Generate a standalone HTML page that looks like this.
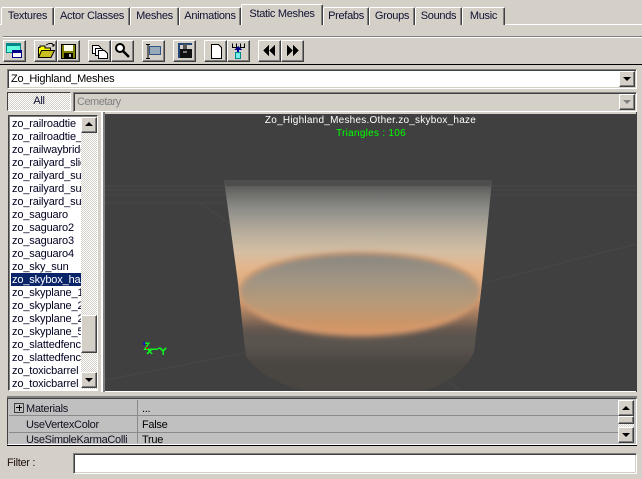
<!DOCTYPE html>
<html><head><meta charset="utf-8"><style>
html,body{margin:0;padding:0}
body{width:642px;height:479px;position:relative;overflow:hidden;background:#d4d0c8;font:11px "Liberation Sans",sans-serif;color:#000;letter-spacing:-.3px}
div,span{position:absolute;box-sizing:border-box;white-space:nowrap}
.tab{top:7px;height:18px;background:#d4d0c8;border:1px solid #fff;border-bottom:0;border-right:1px solid #404040;border-radius:2px 2px 0 0;box-shadow:inset -1px 0 #808080;text-align:center;line-height:17px;color:#101030}
.b{top:40px;width:23px;height:22px;background:#d4d0c8;border:1px solid;border-color:#fff #404040 #404040 #fff;box-shadow:inset -1px -1px #808080}
.sunk{background:#fff;border:1px solid;border-color:#808080 #fff #fff #808080;box-shadow:inset 1px 1px #404040,inset -1px -1px #d4d0c8}
.sb{background:#d4d0c8;border:1px solid;border-color:#fff #404040 #404040 #fff;box-shadow:inset -1px -1px #808080}
.li{left:11px;width:70px;height:13px;line-height:14px;padding-left:1px;overflow:hidden;color:#000020;letter-spacing:-.15px}
.d{background:repeating-conic-gradient(#fff 0 25%,#d4d0c8 0 50%) 0 0/2px 2px}
</style></head><body>
<div style="left:0;top:24px;width:642px;height:1px;background:#fff"></div>
<div class="tab" style="left:1px;width:53px">Textures</div>
<div class="tab" style="left:54px;width:76px">Actor Classes</div>
<div class="tab" style="left:130px;width:49px">Meshes</div>
<div class="tab" style="left:179px;width:62px">Animations</div>
<div class="tab" style="left:241px;width:82px;top:4px;height:21px;line-height:18px;z-index:2">Static Meshes</div>
<div class="tab" style="left:323px;width:46px">Prefabs</div>
<div class="tab" style="left:369px;width:46px">Groups</div>
<div class="tab" style="left:415px;width:47px">Sounds</div>
<div class="tab" style="left:462px;width:43px">Music</div>

<div style="left:3px;top:36px;width:639px;height:1px;background:#808080"></div>
<div style="left:3px;top:37px;width:639px;height:1px;background:#fff"></div>

<div class="b" style="left:3px"></div><div class="b" style="left:34px"></div><div class="b" style="left:57px"></div>
<div class="b" style="left:88px"></div><div class="b" style="left:111px"></div><div class="b" style="left:142px"></div>
<div class="b" style="left:173px"></div><div class="b" style="left:204px"></div><div class="b" style="left:227px"></div>
<div class="b" style="left:258px"></div><div class="b" style="left:281px"></div>

<svg width="642" height="70" style="position:absolute;left:0;top:0;z-index:3" shape-rendering="crispEdges">
<rect x="6.5" y="43.5" width="14" height="9" fill="#6fd" stroke="#088"/><rect x="7" y="44" width="13" height="2" fill="#088"/>
<rect x="12.5" y="50.5" width="9" height="7" fill="#fff" stroke="#008"/><rect x="13" y="51" width="8" height="2" fill="#008"/>
<path d="M38.5 57.5V47.5H40V46H45V48H50.5V50.5" fill="#ff0" stroke="#000"/><path d="M38.5 57.5L41.5 50.5H54.5L51 57.5Z" fill="#c8c020" stroke="#000" shape-rendering="auto"/><path d="M46 45L49 43.5H52L54 46M54 46L52 46M54 46V44" fill="none" stroke="#000"/>
<rect x="61.5" y="44.5" width="14" height="14" fill="#808000" stroke="#000"/><rect x="64" y="45" width="9" height="6" fill="#ffe"/><rect x="64" y="53" width="9" height="5" fill="#000"/><rect x="69" y="54" width="2" height="3" fill="#bbb"/>
<path d="M92.5 45.5H98.5L100.5 47.5V53.5H92.5Z" fill="#fff" stroke="#000"/><path d="M95.5 48.5H101.5L103.5 50.5V55.5H95.5Z" fill="#fff" stroke="#000"/><path d="M98.5 50.5H104.5L107.5 53.5V58.5H98.5Z" fill="#fff" stroke="#000"/>
<circle cx="120" cy="48" r="4" fill="#fff" stroke="#000" stroke-width="2" shape-rendering="auto"/><path d="M123 51L129 57" stroke="#000" stroke-width="2.5" shape-rendering="auto"/>
<rect x="149.500" y="46.500" width="11" height="8" fill="#9ab" stroke="#358"/><path d="M146 44.500H150M146 58.500H150M148 44V58" stroke="#000" fill="none"/>
<path d="M178 43H192V45H180V58H178Z" fill="#247"/><path d="M183 44H187V49H183Z" fill="#555"/><rect x="180" y="49" width="12" height="9" fill="#111"/><rect x="183" y="51" width="4" height="2" fill="#777"/>
<path d="M211.500 44.500H218.500L221.500 47.500V58.500H211.500Z" fill="#fff" stroke="#000"/>
<path d="M232.500 43.500V47.500H236.500V43.500M240.500 43.500V47.500H244.500V43.500" fill="none" stroke="#000"/><path d="M238 47V53" stroke="#00a" stroke-width="2"/><path d="M234 50H242L238 46Z" fill="#008"/><rect x="235.500" y="52.500" width="5" height="6" fill="#7ee" stroke="#088"/>
<path d="M263 50.500L269 45V56ZM269 50.500L275 45V56Z" fill="#000"/>
<path d="M287 45L293 50.500L287 56ZM293 45L299 50.500L293 56Z" fill="#000"/>
</svg>

<div style="left:0;top:64px;width:642px;height:1px;background:#000"></div>

<div class="sunk" style="left:7px;top:69px;width:630px;height:20px;padding-left:3px;line-height:18px;color:#000;letter-spacing:-.2px">Zo_Highland_Meshes</div>
<div class="sb" style="left:619px;top:71px;width:16px;height:16px"></div>
<div style="left:623px;top:77px;border:4px solid transparent;border-top:4px solid #000;border-bottom:0"></div>

<div class="d" style="left:7px;top:92px;width:64px;height:19px;border:1px solid;border-color:#404040 #fff #fff #404040;text-align:center;line-height:17px;color:#101030">All</div>
<div style="left:73px;top:92px;width:564px;height:20px;background:#d4d0c8;border:1px solid;border-color:#808080 #fff #fff #808080;box-shadow:inset 1px 1px #404040;padding-left:3px;line-height:18px;color:#808080;letter-spacing:-.5px">Cemetary</div>
<div class="sb" style="left:619px;top:94px;width:16px;height:16px"></div>
<div style="left:623px;top:100px;border:4px solid transparent;border-top:4px solid #808080;border-bottom:0"></div>

<div style="left:8px;top:115px;width:90px;height:276px;background:#fff;border:1px solid;border-color:#404040 #fff #fff #404040;box-shadow:inset 1px 1px #808080"></div>
<div class="li" style="top:117px">zo_railroadtie</div>
<div class="li" style="top:130px">zo_railroadtie_s</div>
<div class="li" style="top:143px">zo_railwaybridge</div>
<div class="li" style="top:156px">zo_railyard_slide</div>
<div class="li" style="top:169px">zo_railyard_supp</div>
<div class="li" style="top:182px">zo_railyard_supp</div>
<div class="li" style="top:195px">zo_railyard_supp</div>
<div class="li" style="top:208px">zo_saguaro</div>
<div class="li" style="top:221px">zo_saguaro2</div>
<div class="li" style="top:234px">zo_saguaro3</div>
<div class="li" style="top:247px">zo_saguaro4</div>
<div class="li" style="top:260px">zo_sky_sun</div>
<div class="li" style="top:273px;background:#0a246a;color:#fff">zo_skybox_haze</div>
<div class="li" style="top:286px">zo_skyplane_1</div>
<div class="li" style="top:299px">zo_skyplane_2</div>
<div class="li" style="top:312px">zo_skyplane_2</div>
<div class="li" style="top:325px">zo_skyplane_5</div>
<div class="li" style="top:338px">zo_slattedfence</div>
<div class="li" style="top:351px">zo_slattedfence</div>
<div class="li" style="top:364px">zo_toxicbarrel</div>
<div class="li" style="top:377px;height:12px">zo_toxicbarrel</div>
<div class="d" style="left:81px;top:117px;width:16px;height:272px"></div>
<div class="sb" style="left:81px;top:117px;width:16px;height:16px"></div>
<div style="left:85px;top:122px;border:4px solid transparent;border-bottom:4px solid #000;border-top:0"></div>
<div class="sb" style="left:81px;top:315px;width:16px;height:38px"></div>
<div class="sb" style="left:81px;top:372px;width:16px;height:16px"></div>
<div style="left:85px;top:378px;border:4px solid transparent;border-top:4px solid #000;border-bottom:0"></div>

<div style="left:101px;top:112px;width:2px;height:280px;background:#fff"></div>
<div style="left:103px;top:112px;width:2px;height:280px;background:#808080"></div>
<svg width="532" height="278" viewBox="105 114 532 278" style="position:absolute;left:105px;top:114px">
<defs>
<linearGradient id="g" x1="0" y1="180" x2="0" y2="391" gradientUnits="userSpaceOnUse">
<stop offset="0" stop-color="#484848"/><stop offset=".04" stop-color="#636361"/><stop offset=".14" stop-color="#8f8e8a"/><stop offset=".26" stop-color="#bbb09e"/><stop offset=".34" stop-color="#d4bea3"/><stop offset=".42" stop-color="#e4b68c"/><stop offset=".56" stop-color="#dd9f70"/><stop offset=".7" stop-color="#6e5c50"/><stop offset=".78" stop-color="#4e4844"/><stop offset="1" stop-color="#463f3c"/>
</linearGradient>
<linearGradient id="e" x1="0" y1="254" x2="0" y2="332" gradientUnits="userSpaceOnUse">
<stop offset="0" stop-color="#888680"/><stop offset=".3" stop-color="#9e9484"/><stop offset=".65" stop-color="#b89a78"/><stop offset="1" stop-color="#d4935f"/>
</linearGradient>
<linearGradient id="f" x1="0" y1="325" x2="0" y2="365" gradientUnits="userSpaceOnUse">
<stop offset="0" stop-color="#585450" stop-opacity="0"/><stop offset=".45" stop-color="#5c5650"/><stop offset="1" stop-color="#4a4441" />
</linearGradient>
<filter id="bl" x="-10%" y="-20%" width="120%" height="140%"><feGaussianBlur stdDeviation="3"/></filter>
<clipPath id="c"><path d="M224 180L238 283L244 340L246 356Q262 380 305 391H425Q462 378 474 352L482 283L492 180Z"/></clipPath>
</defs>
<rect x="105" y="114" width="532" height="278" fill="#404040"/>
<g stroke="#484848" fill="none">
<path d="M105 186H637M105 190H637M105 195H637M105 203H225"/>
<path d="M200 203L260 245M105 380L245 353M483 283L637 244M443 378L462 392"/>
</g>
<g clip-path="url(#c)">
<rect x="220" y="178" width="275" height="215" fill="url(#g)"/>
<path d="M224 180H492L490 186H226Z" fill="#4e4e4e"/>
<rect x="220" y="325" width="275" height="68" fill="url(#f)" filter="url(#bl)"/>
<path d="M241 290C242 352 478 352 479 290C479 240 241 240 241 290Z" fill="#d89a6c" filter="url(#bl)"/>
<ellipse cx="360" cy="292" rx="120" ry="38" fill="url(#e)" filter="url(#bl)"/>
</g>
<g stroke="#0c0" stroke-width="1.500" fill="none" shape-rendering="crispEdges">
<path d="M145 343H149L145 349H149M144 349H158M146 347L152 354M152 349L147 354M158 348H160M160 348L163 351L166 348M163 351V355" stroke="#1e2"/>
<path d="M144 342V345" stroke="#00f"/><path d="M146 348H148" stroke="#d00"/>
</g>
</svg>
<div style="left:105px;top:114px;width:532px;text-align:center;font-size:10px;letter-spacing:.24px;line-height:13px;color:#fff;text-indent:-1px">Zo_Highland_Meshes.Other.zo_skybox_haze</div>
<div style="left:105px;top:127px;width:532px;text-align:center;font-size:10px;letter-spacing:.27px;line-height:13px;color:#0f0">Triangles : 106</div>
<div style="left:105px;top:391px;width:532px;height:1px;background:#fff"></div>
<div style="left:636px;top:112px;width:1px;height:280px;background:#404040"></div>

<div style="left:7px;top:396px;width:630px;height:2px;background:#808080"></div>
<div style="left:7px;top:398px;width:630px;height:47px;background:#c0c0c0;border:1px solid;border-color:#404040 #fff #fff #404040"></div>
<div style="left:9px;top:400px;width:609px;height:16px;border-bottom:1px solid #8a8a8a"></div>
<div style="left:9px;top:417px;width:609px;height:16px;border-bottom:1px solid #8a8a8a"></div>
<div style="left:137px;top:400px;width:1px;height:43px;background:#8a8a8a"></div>
<div style="left:14px;top:403px;width:10px;height:10px;border:1px solid #404040"></div>
<div style="left:16px;top:407px;width:6px;height:1px;background:#000"></div>
<div style="left:19px;top:405px;width:1px;height:6px;background:#000"></div>
<div style="left:26px;top:401px;line-height:16px;color:#101020">Materials</div>
<div style="left:26px;top:417px;line-height:16px;color:#101020">UseVertexColor</div>
<div style="left:26px;top:434px;height:9px;width:110px;overflow:hidden;line-height:13px;color:#101020">UseSimpleKarmaColli</div>
<div style="left:142px;top:401px;line-height:16px">...</div>
<div style="left:142px;top:417px;line-height:16px">False</div>
<div style="left:142px;top:434px;height:9px;overflow:hidden;line-height:13px">True</div>
<div class="d" style="left:618px;top:400px;width:16px;height:43px"></div>
<div class="sb" style="left:618px;top:400px;width:16px;height:16px"></div>
<div style="left:622px;top:406px;border:4px solid transparent;border-bottom:4px solid #000;border-top:0"></div>
<div class="sb" style="left:618px;top:416px;width:16px;height:8px"></div>
<div class="sb" style="left:618px;top:427px;width:16px;height:16px"></div>
<div style="left:622px;top:433px;border:4px solid transparent;border-top:4px solid #000;border-bottom:0"></div>

<div style="left:7px;top:445px;width:630px;height:1px;background:#000"></div>
<div style="left:7px;top:455px;line-height:16px;color:#201010">Filter :</div>
<div class="sunk" style="left:73px;top:453px;width:564px;height:21px"></div>
</body></html>
